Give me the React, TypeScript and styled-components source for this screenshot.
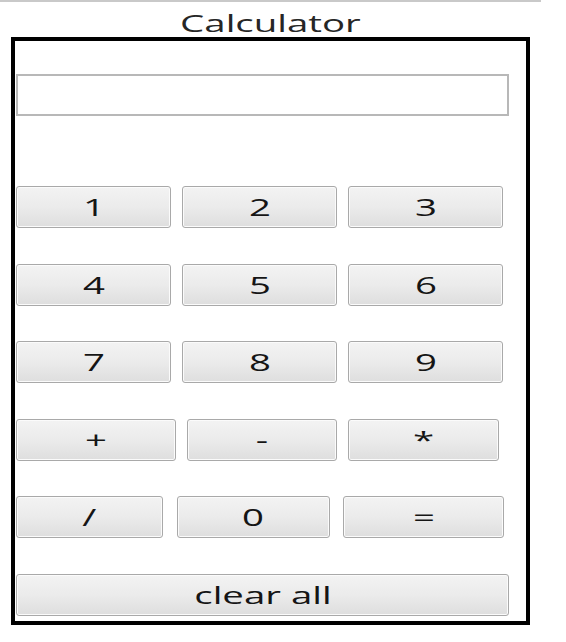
import React from "react";
import styled, { createGlobalStyle } from "styled-components";

const Global = createGlobalStyle`
  html, body { margin: 0; padding: 0; background: #ffffff; }
  body { font-family: "Open Sans", "DejaVu Sans", sans-serif; }
`;

const Page = styled.div`
  width: 566px;
  height: 642px;
  display: flex;
  flex-direction: column;
`;

const TopRule = styled.div`
  width: 541px;
  height: 2px;
  background: #c9c9c9;
`;

const Title = styled.div`
  width: 541px;
  padding: 9px 0 2px;
  line-height: 24px;
  font-size: 24px;
  color: #262626;
  text-align: center;
`;

const Stretch = styled.span`
  display: inline-block;
  transform: scaleX(1.6);
  transform-origin: center;
`;

const Frame = styled.div`
  box-sizing: border-box;
  margin-left: 11px;
  width: 519px;
  height: 588px;
  border: 4px solid #000;
  display: flex;
  flex-direction: column;
  padding: 33px 0 0 1px;
`;

const Display = styled.input`
  box-sizing: border-box;
  width: 493px;
  height: 42px;
  border: 2px solid #b8b8b8;
  background: #fff;
  outline: none;
  font-size: 22px;
  font-family: "Open Sans", sans-serif;
`;

const Pad = styled.div`
  margin-top: 70px;
  display: flex;
  flex-direction: column;
  gap: 35.6px;
`;

const Row = styled.div<{ $cols: string; $gap: number }>`
  display: grid;
  grid-template-columns: ${(p) => p.$cols};
  column-gap: ${(p) => p.$gap}px;
  height: 42px;
`;

const Key = styled.button`
  box-sizing: border-box;
  height: 42px;
  margin: 0;
  padding: 0;
  border: 1px solid #a9a9a9;
  border-radius: 3px;
  background: linear-gradient(to bottom, #f3f3f3 0%, #ebebeb 50%, #dedede 100%);
  box-shadow: inset 0 0 0 1px #fbfbfb;
  font-family: "Open Sans", "DejaVu Sans", sans-serif;
  font-size: 24px;
  line-height: 40px;
  color: #151515;
  text-align: center;
  overflow: hidden;
`;

const rows: { cols: string; gap: number; keys: string[] }[] = [
  { cols: "155px 155px 155px", gap: 11, keys: ["1", "2", "3"] },
  { cols: "155px 155px 155px", gap: 11, keys: ["4", "5", "6"] },
  { cols: "155px 155px 155px", gap: 11, keys: ["7", "8", "9"] },
  { cols: "160px 150px 151px", gap: 11, keys: ["+", "-", "*"] },
  { cols: "147px 153px 161px", gap: 13.5, keys: ["/", "0", "="] },
  { cols: "493px", gap: 0, keys: ["clear all"] },
];

export default function App() {
  return (
    <Page>
      <Global />
      <TopRule />
      <Title>
        <Stretch>Calculator</Stretch>
      </Title>
      <Frame>
        <Display type="text" />
        <Pad>
          {rows.map((r, i) => (
            <Row key={i} $cols={r.cols} $gap={r.gap}>
              {r.keys.map((k) => (
                <Key key={k}>
                  <Stretch>{k}</Stretch>
                </Key>
              ))}
            </Row>
          ))}
        </Pad>
      </Frame>
    </Page>
  );
}
